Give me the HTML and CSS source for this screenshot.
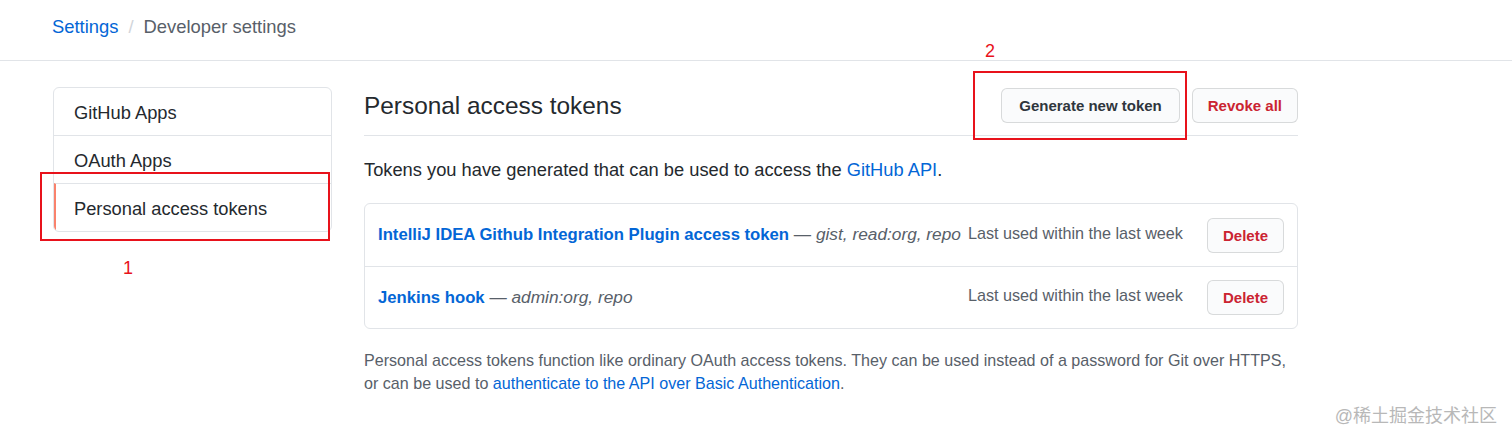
FILE: index.html
```html
<!DOCTYPE html>
<html lang="en">
<head>
<meta charset="utf-8">
<title>Personal access tokens</title>
<link rel="stylesheet" href="styles.css">
</head>
<body>
<div class="page">
  <header class="topbar">
    <nav class="crumbs">
      <a class="crumb-link" href="#">Settings</a>
      <span class="crumb-sep">/</span>
      <span class="crumb-current">Developer settings</span>
    </nav>
  </header>

  <div class="layout">
    <aside class="sidebar">
      <nav class="menu">
        <a class="menu-item" href="#">GitHub Apps</a>
        <a class="menu-item" href="#">OAuth Apps</a>
        <a class="menu-item selected" href="#">Personal access tokens</a>
      </nav>
      <div class="mark mark-1"></div>
      <div class="mark-label label-1">1</div>
    </aside>

    <main class="main">
      <div class="subhead">
        <h2 class="subhead-title">Personal access tokens</h2>
        <div class="subhead-actions">
          <button class="btn">Generate new token</button>
          <button class="btn btn-danger btn-revoke">Revoke all</button>
        </div>
        <div class="mark mark-2"></div>
        <div class="mark-label label-2">2</div>
      </div>

      <p class="lead">Tokens you have generated that can be used to access the <a href="#">GitHub API</a>.</p>

      <div class="box">
        <div class="box-row">
          <div class="token-info">
            <a class="token-name" href="#">IntelliJ IDEA Github Integration Plugin access token</a>
            <span class="token-scopes">— <em>gist, read:org, repo</em></span>
          </div>
          <span class="last-used">Last used within the last week</span>
          <button class="btn btn-danger btn-sm">Delete</button>
        </div>
        <div class="box-row">
          <div class="token-info">
            <a class="token-name" href="#">Jenkins hook</a>
            <span class="token-scopes">— <em>admin:org, repo</em></span>
          </div>
          <span class="last-used">Last used within the last week</span>
          <button class="btn btn-danger btn-sm">Delete</button>
        </div>
      </div>

      <p class="note">Personal access tokens function like ordinary OAuth access tokens. They can be used instead of a password for Git over HTTPS,<br>or can be used to <a href="#">authenticate to the API over Basic Authentication</a>.</p>
    </main>
  </div>

  <div class="watermark">@稀土掘金技术社区</div>
</div>
</body>
</html>
```

FILE: styles.css
```css
* { box-sizing: border-box; }

html, body {
  margin: 0;
  padding: 0;
  background: #ffffff;
}

body {
  font-family: "Liberation Sans", Arial, "Noto Sans CJK SC", sans-serif;
  color: #24292e;
  font-size: 17px;
  line-height: 1.5;
}

a { text-decoration: none; color: #0366d6; }

.page {
  position: relative;
  width: 1512px;
  height: 441px;
  overflow: hidden;
}

.topbar {
  height: 61px;
  border-bottom: 1px solid #e1e4e8;
  padding: 13px 0 0 52px;
}

.crumbs {
  display: flex;
  align-items: center;
  gap: 10px;
  font-size: 18.4px;
  line-height: 28px;
}

.crumb-link { color: #0366d6; }
.crumb-sep { color: #d1d5da; }
.crumb-current { color: #586069; }

.layout {
  display: flex;
  gap: 32px;
  padding: 26px 0 0 53px;
}

.sidebar {
  position: relative;
  width: 279px;
  flex: none;
}

.menu {
  display: flex;
  flex-direction: column;
  border: 1px solid #e1e4e8;
  border-radius: 6px;
  overflow: hidden;
}

.menu-item {
  display: flex;
  align-items: center;
  height: 48px;
  padding-left: 20px;
  padding-top: 3px;
  color: #24292e;
  font-size: 18.3px;
  border-top: 1px solid #e1e4e8;
}
.menu-item:first-child { border-top: 0; height: 47px; }

.menu-item.selected {
  border-left: 2px solid #f9826c;
  padding-left: 18px;
}

.mark {
  position: absolute;
  border: 2px solid #e8121b;
  pointer-events: none;
}
.mark-1 { left: -13px; top: 85px; width: 290px; height: 69px; }

.mark-label {
  position: absolute;
  color: #e8121b;
  font-size: 18px;
  line-height: 20px;
}
.label-1 { left: 70px; top: 171px; }

.main {
  width: 934px;
  flex: none;
}

.subhead {
  position: relative;
  display: flex;
  align-items: center;
  justify-content: space-between;
  border-bottom: 1px solid #e1e4e8;
  height: 49px;
  padding-bottom: 11px;
}

.subhead-title {
  margin: 0;
  font-size: 24.4px;
  font-weight: 400;
  line-height: 32px;
}

.subhead-actions {
  display: flex;
  gap: 12px;
  margin-bottom: 1px;
}

.mark-2 { left: 609px; top: -16px; width: 214px; height: 69px; }
.label-2 { left: 621px; top: -46px; }

.btn {
  font-family: inherit;
  font-size: 15px;
  font-weight: 700;
  color: #2f363d;
  background: #fafbfc;
  border: 1px solid rgba(27, 31, 35, 0.15);
  border-radius: 6px;
  height: 35px;
  padding: 0 17px;
  cursor: pointer;
}

.btn-danger { color: #cb2431; }
.btn-revoke { padding: 0 15px; }
.btn-sm { height: 35px; padding: 0 15px; }

.lead {
  margin: 21px 0 0 0;
  font-size: 18.3px;
  line-height: 26px;
}

.box {
  margin-top: 20px;
  border: 1px solid #e1e4e8;
  border-radius: 6px;
}

.box-row {
  display: flex;
  align-items: center;
  height: 62px;
  padding: 0 13px;
  border-top: 1px solid #e1e4e8;
}
.box-row:first-child { border-top: 0; }

.token-info {
  flex: 1;
  white-space: nowrap;
}

.token-name {
  font-weight: 700;
  font-size: 16.7px;
}

.token-scopes {
  color: #586069;
  font-size: 17.3px;
}

.last-used {
  color: #586069;
  font-size: 16.2px;
  margin-right: 24px;
  margin-top: -4px;
  white-space: nowrap;
}

.note {
  margin: 20px 0 0 0;
  color: #586069;
  font-size: 16.1px;
  line-height: 23px;
}

.watermark {
  position: absolute;
  right: 15px;
  bottom: 14px;
  color: #b8b8b8;
  font-size: 18px;
  line-height: 22px;
}
```
